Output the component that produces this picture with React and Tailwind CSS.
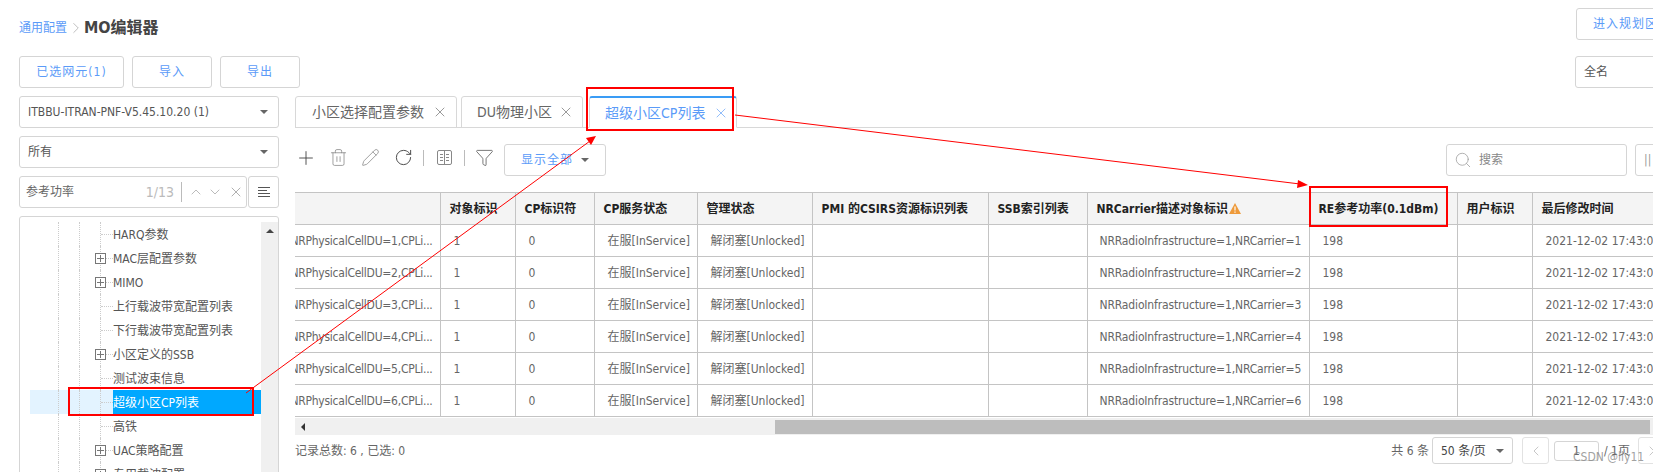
import { Plus, Trash2, Pencil, RotateCw, Filter, X, ChevronUp, ChevronDown, ChevronLeft, ChevronRight, Search } from 'lucide-react';

const FONT = "font-['DejaVu_Sans','Noto_Sans_CJK_SC',sans-serif] font-stretch-condensed";

const treeRows = [
    { label: 'HARQ参数' },
    { label: 'MAC层配置参数', plus: true },
    { label: 'MIMO', plus: true },
    { label: '上行载波带宽配置列表' },
    { label: '下行载波带宽配置列表' },
    { label: '小区定义的SSB', plus: true },
    { label: '测试波束信息' },
    { label: '超级小区CP列表', selected: true },
    { label: '高铁' },
    { label: 'UAC策略配置', plus: true },
    { label: '专用载波配置', plus: true },
];

const columns = [
    { label: '', width: 'w-[145px]' },
    { label: '对象标识', width: 'w-[75px]' },
    { label: 'CP标识符', width: 'w-[79px]' },
    { label: 'CP服务状态', width: 'w-[103px]' },
    { label: '管理状态', width: 'w-[115px]' },
    { label: 'PMI 的CSIRS资源标识列表', width: 'w-[176px]' },
    { label: 'SSB索引列表', width: 'w-[99px]' },
    { label: 'NRCarrier描述对象标识', width: 'w-[222px]', warn: true },
    { label: 'RE参考功率(0.1dBm)', width: 'w-[148px]' },
    { label: '用户标识', width: 'w-[75px]' },
    { label: '最后修改时间', width: 'w-[180px]' },
];

const rows = [1, 2, 3, 4, 5, 6];

const Caret = ({ className = '' }) => (
    <span className={`w-0 h-0 border-x-[4px] border-x-transparent border-t-[4px] border-t-[#666] ${className}`} />
);

const OutlineButton = ({ width, children }) => (
    <button className={`${width} h-8 shrink-0 border border-[#d5d5d5] rounded-[3px] bg-white text-xs tracking-[1px] text-[#5b9bf8]`}>
        {children}
    </button>
);

const SelectBox = ({ children }) => (
    <div className="h-8 flex items-center justify-between pl-[8px] pr-[10px] border border-[#d5d5d5] rounded-[3px] text-xs text-[#555]">
        <span>{children}</span>
        <Caret />
    </div>
);

const Tab = ({ width, label, active, gap, rightPad, leftPad }) => (
    <div className={`${width} ${gap} ${rightPad} ${leftPad} h-[32px] flex items-center justify-between border border-[#d8d8d8] rounded-t-[3px] text-sm ${active ? 'border-t-2 border-t-[#3a9cf5] border-b-white text-[#5b9bf8] bg-white' : 'text-[#666]'}`}>
        <span>{label}</span>
        <X size={16} strokeWidth={1} />
    </div>
);

const TreeRow = ({ label, plus, selected }) => (
    <div className={`h-6 flex shrink-0 ${selected ? 'bg-[#e3f3ff]' : ''}`}>
        <div className="w-[28px]" />
        <div className="w-[21px] border-l border-dotted border-[#ccc]" />
        <div className="w-[21px] border-l border-dotted border-[#ccc]" />
        <div className="w-[13px] border-l border-dotted border-[#ccc] relative">
            <div className="absolute left-0 right-0 top-[12px] border-t border-dotted border-[#ccc]" />
            {plus && (
                <svg className="absolute left-[-6px] top-[7px]" width="11" height="11" viewBox="0 0 11 11" fill="#fff" stroke="#777">
                    <rect x="0.5" y="0.5" width="10" height="10" />
                    <path d="M2 5.5H9M5.5 2V9" />
                </svg>
            )}
        </div>
        <div className={`flex-1 flex items-center pt-[2px] text-xs ${selected ? 'bg-[#00a8ff] text-white' : 'text-[#555]'}`}>
            {label}
        </div>
    </div>
);

const ColumnsIcon = () => (
    <svg width="15" height="15" viewBox="0 0 15 15" fill="none" stroke="#888" strokeWidth="1">
        <rect x="0.5" y="0.5" width="14" height="14" rx="1.5" />
        <path d="M7.5 1V14M3 4.5H6M3 7.5H6M3 10.5H6M9 4.5H12M9 7.5H12M9 10.5H12" />
    </svg>
);

const ListIcon = () => (
    <svg width="12" height="10" viewBox="0 0 12 10" fill="none" stroke="#555">
        <path d="M0 0.5H12M0 3.5H9M0 6.5H12M0 9.5H12" />
    </svg>
);

function DataTable() {
    return (
        <table className="table-fixed border-collapse w-[1317px] text-xs">
            <thead>
                <tr className="h-8 bg-[#f4f4f4] font-bold text-[#222]">
                    {columns.map((col, key) => (
                        <th key={key} className={`${col.width} border border-[#c4c4c4] border-l-0 px-[9px] text-left whitespace-nowrap overflow-hidden`}>
                            <span className="inline-flex items-center">
                                {col.label}
                                {col.warn && (
                                    <svg width="12" height="11" viewBox="0 0 12 11" className="ml-[1px]">
                                        <path d="M6 0L12 11H0Z" fill="#ee9a3a" />
                                        <path d="M6 3.5V7.5M6 8.5V9.8" stroke="#fff" strokeWidth="1.2" />
                                    </svg>
                                )}
                            </span>
                        </th>
                    ))}
                </tr>
            </thead>
            <tbody className="text-[#666]">
                {rows.map((n) => (
                    <tr key={n} className="h-8">
                        <td className="border border-[#c4c4c4] border-l-0 overflow-hidden">
                            <div className="flex justify-end whitespace-nowrap tracking-[-0.25px] pr-[7px]">NRPhysicalCellDU={n},CPLi...</div>
                        </td>
                        <td className="border border-[#c4c4c4] pl-[13px]">1</td>
                        <td className="border border-[#c4c4c4] pl-[13px]">0</td>
                        <td className="border border-[#c4c4c4] pl-[13px] whitespace-nowrap">在服[InService]</td>
                        <td className="border border-[#c4c4c4] pl-[13px] whitespace-nowrap">解闭塞[Unlocked]</td>
                        <td className="border border-[#c4c4c4]" />
                        <td className="border border-[#c4c4c4]" />
                        <td className="border border-[#c4c4c4] pl-[12px] whitespace-nowrap tracking-[-0.15px]">NRRadioInfrastructure=1,NRCarrier={n}</td>
                        <td className="border border-[#c4c4c4] pl-[13px]">198</td>
                        <td className="border border-[#c4c4c4]" />
                        <td className="border border-[#c4c4c4] pl-[13px] whitespace-nowrap">2021-12-02 17:43:07</td>
                    </tr>
                ))}
            </tbody>
        </table>
    );
}

// red markup drawn on top of the screenshot
const Annotations = () => (
    <svg className="absolute inset-0 pointer-events-none" width="1653" height="472" fill="none">
        <rect x="69" y="388" width="184" height="27" stroke="#f00" strokeWidth="2" />
        <rect x="587" y="88" width="146" height="42" stroke="#f00" strokeWidth="2" />
        <rect x="1310" y="187" width="137" height="39" stroke="#f00" strokeWidth="2" />
        <path d="M246 393L590 141" stroke="#f00" />
        <path d="M596 136L586 138L591 145Z" fill="#f00" />
        <path d="M735 115L1300 184" stroke="#f00" />
        <path d="M1308 185L1298 180L1297 188Z" fill="#f00" />
    </svg>
);

export default function App() {
    return (
        <div className={`relative w-[1653px] h-[472px] overflow-hidden bg-white ${FONT}`}>
            <div className="h-[56px] flex justify-between pl-[19px]">
                <div className="flex items-center h-[56px]">
                    <span className="text-xs text-[#5b9bf8]">通用配置</span>
                    <ChevronRight size={18} strokeWidth={1} className="text-[#aaa]" />
                    <span className="text-base font-bold text-[#444] -ml-[1px]">MO编辑器</span>
                </div>
                <div className="pt-2 mr-[-33px]">
                    <button className="w-[110px] h-8 border border-[#d5d5d5] rounded-[3px] text-xs tracking-[1px] text-[#5b9bf8] text-left pl-[16px]">进入规划区</button>
                </div>
            </div>

            <div className="h-[40px] flex justify-between pl-[19px]">
                <div className="flex gap-2">
                    <OutlineButton width="w-[105px]">已选网元(1)</OutlineButton>
                    <OutlineButton width="w-[80px]">导入</OutlineButton>
                    <OutlineButton width="w-[80px]">导出</OutlineButton>
                </div>
                <div className="w-[110px] mr-[-32px] h-8 border border-[#d5d5d5] rounded-[3px] text-xs text-[#555] flex items-center pl-[8px]">全名</div>
            </div>

            <div className="flex pl-[19px] gap-[16px]">
                <div className="w-[260px] shrink-0 flex flex-col gap-2">
                    <SelectBox>ITBBU-ITRAN-PNF-V5.45.10.20 (1)</SelectBox>
                    <SelectBox>所有</SelectBox>
                    <div className="flex gap-[1px] h-8">
                        <div className="w-[228px] flex items-center border border-[#d5d5d5] rounded-[3px] pl-[6px] text-xs text-[#666]">
                            <span className="flex-1">参考功率</span>
                            <span className="text-[#bbb] text-sm">1/13</span>
                            <span className="h-5 border-l border-[#bbb] ml-[7px] mr-[6px]" />
                            <ChevronUp size={16} strokeWidth={1} className="text-[#999]" />
                            <ChevronDown size={16} strokeWidth={1} className="text-[#999] ml-[3px]" />
                            <X size={16} strokeWidth={1} className="text-[#888] ml-[5px] mr-[2px]" />
                        </div>
                        <div className="flex-1 flex items-center justify-center border border-[#d5d5d5] rounded-[3px]">
                            <ListIcon />
                        </div>
                    </div>
                    <div className="h-[300px] flex border border-[#d5d5d5] rounded-[3px] pl-[10px] pt-[5px]">
                        <div className="w-[231px] flex flex-col">
                            {treeRows.map((row, key) => <TreeRow key={key} {...row} />)}
                        </div>
                        <div className="w-[17px] bg-[#f0f0f0] flex justify-center pt-[7px]">
                            <span className="w-0 h-0 border-x-[4px] border-x-transparent border-b-[4px] border-b-[#444]" />
                        </div>
                    </div>
                </div>

                <div className="flex-1 min-w-0">
                    <div className="flex h-[32px] border-b border-[#d8d8d8]">
                        <Tab width="w-[162px]" leftPad="pl-[16px]" rightPad="pr-[8px]" label="小区选择配置参数" />
                        <Tab width="w-[122px]" leftPad="pl-[15px]" rightPad="pr-[8px]" gap="ml-[4px]" label="DU物理小区" />
                        <Tab width="w-[148px]" leftPad="pl-[15px]" rightPad="pr-[7px]" gap="ml-[6px]" label="超级小区CP列表" active />
                    </div>

                    <div className="h-[64px] flex items-center">
                        <div className="flex items-center pb-[5px]">
                            <Plus size={22} strokeWidth={1} className="text-[#444]" />
                            <Trash2 size={19} strokeWidth={1} className="text-[#888] ml-[12px]" />
                            <Pencil size={19} strokeWidth={1} className="text-[#888] ml-[13px]" />
                            <RotateCw size={19} strokeWidth={1.2} className="text-[#444] ml-[14px]" />
                            <span className="h-4 border-l border-[#bbb] ml-[10px] mr-[13px]" />
                            <ColumnsIcon />
                            <span className="h-4 border-l border-[#bbb] ml-[12px] mr-[10px]" />
                            <Filter size={19} strokeWidth={1} className="text-[#555]" />
                        </div>
                        <button className="ml-[10px] w-[102px] h-8 border border-[#d5d5d5] rounded-[3px] flex items-center justify-center gap-2 text-xs tracking-[1px] text-[#5b9bf8]">
                            显示全部 <Caret />
                        </button>
                        <div className="ml-auto w-[181px] h-8 flex items-center border border-[#d5d5d5] rounded-[3px] pl-[7px] text-xs text-[#888] gap-[7px]">
                            <Search size={18} strokeWidth={1} className="text-[#999]" />
                            搜索
                        </div>
                        <div className="ml-[8px] w-[30px] h-8 shrink-0 border border-[#d5d5d5] rounded-[3px] flex items-center pl-[8px] text-xs text-[#999] mr-[-12px]">||</div>
                    </div>

                    <DataTable />

                    <div className="h-[17px] mt-[1px] bg-[#f0f0f0] flex items-center pl-[6px]">
                        <span className="w-0 h-0 border-y-[4px] border-y-transparent border-r-[4px] border-r-[#333]" />
                        <div className="ml-[470px] w-[875px] h-[14px] bg-[#bdbdbd]" />
                    </div>

                    <div className="h-[30px] flex items-center justify-between text-xs text-[#666] pt-[1px]">
                        <span>记录总数: 6 , 已选: 0</span>
                        <div className="flex items-center mr-[-12px]">
                            <span>共 6 条</span>
                            <div className="ml-[3px] w-[81px] h-[27px] border border-[#d5d5d5] rounded-[3px] flex items-center justify-between px-[8px] text-[#444]">
                                50 条/页 <Caret />
                            </div>
                            <div className="ml-[9px] w-[27px] h-[27px] border border-[#e2e2e2] rounded-[3px] flex items-center justify-center">
                                <ChevronLeft size={16} strokeWidth={1} className="text-[#aaa]" />
                            </div>
                            <div className="ml-[5px] w-[45px] h-[20px] border border-[#d5d5d5] rounded-[3px] text-center leading-[18px]">1</div>
                            <span className="ml-[5px] w-[29px] whitespace-nowrap">/ 1页</span>
                            <div className="ml-[5px] w-[27px] h-[27px] border border-[#e2e2e2] rounded-[3px] flex items-center justify-center">
                                <ChevronRight size={16} strokeWidth={1} className="text-[#aaa]" />
                            </div>
                        </div>
                    </div>
                </div>
            </div>

            <span className="absolute left-[1573px] top-[449px] text-xs text-[#888]/80 whitespace-nowrap">CSDN @lly11</span>
            <Annotations />
        </div>
    );
}
